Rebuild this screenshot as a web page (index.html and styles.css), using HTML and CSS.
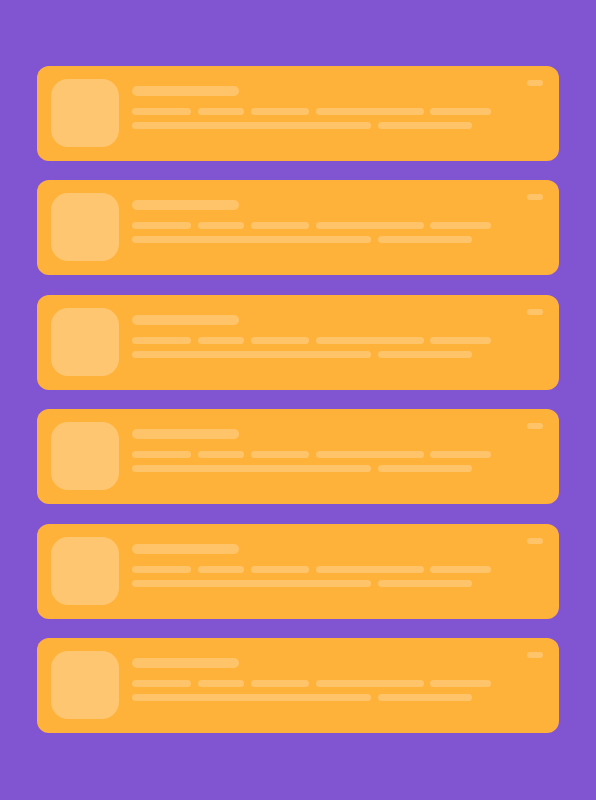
FILE: index.html
```html
<!DOCTYPE html>
<html>
<head>
<meta charset="utf-8">
<link rel="stylesheet" href="styles.css">
</head>
<body>
<div class="list">
  <div class="card"><div class="avatar"></div><div class="content"><div class="title"></div><div class="row"><span class="b w59"></span><span class="b w46"></span><span class="b w58"></span><span class="b w108"></span><span class="b w60"></span></div><div class="row"><span class="b w239"></span><span class="b w94"></span></div></div><div class="tag"></div></div>
  <div class="card"><div class="avatar"></div><div class="content"><div class="title"></div><div class="row"><span class="b w59"></span><span class="b w46"></span><span class="b w58"></span><span class="b w108"></span><span class="b w60"></span></div><div class="row"><span class="b w239"></span><span class="b w94"></span></div></div><div class="tag"></div></div>
  <div class="card"><div class="avatar"></div><div class="content"><div class="title"></div><div class="row"><span class="b w59"></span><span class="b w46"></span><span class="b w58"></span><span class="b w108"></span><span class="b w60"></span></div><div class="row"><span class="b w239"></span><span class="b w94"></span></div></div><div class="tag"></div></div>
  <div class="card"><div class="avatar"></div><div class="content"><div class="title"></div><div class="row"><span class="b w59"></span><span class="b w46"></span><span class="b w58"></span><span class="b w108"></span><span class="b w60"></span></div><div class="row"><span class="b w239"></span><span class="b w94"></span></div></div><div class="tag"></div></div>
  <div class="card"><div class="avatar"></div><div class="content"><div class="title"></div><div class="row"><span class="b w59"></span><span class="b w46"></span><span class="b w58"></span><span class="b w108"></span><span class="b w60"></span></div><div class="row"><span class="b w239"></span><span class="b w94"></span></div></div><div class="tag"></div></div>
  <div class="card"><div class="avatar"></div><div class="content"><div class="title"></div><div class="row"><span class="b w59"></span><span class="b w46"></span><span class="b w58"></span><span class="b w108"></span><span class="b w60"></span></div><div class="row"><span class="b w239"></span><span class="b w94"></span></div></div><div class="tag"></div></div>
</div>
</body>
</html>
```
FILE: styles.css
```css
html, body {
  margin: 0;
  padding: 0;
  background: #8155d1;
  font-family: "Liberation Sans", Arial, sans-serif;
}
.list {
  padding: 66px 37px 0 37px;
  display: flex;
  flex-direction: column;
  gap: 19.4px;
}
.card {
  background: #ffb23a;
  border-radius: 12px;
  height: 95px;
  box-sizing: border-box;
  padding: 13px 16px 14px 14px;
  display: flex;
  align-items: flex-start;
}
.avatar {
  width: 68px;
  height: 68px;
  border-radius: 17px;
  background: #ffc671;
  flex: none;
}
.content {
  flex: 1;
  margin-left: 13px;
  padding-top: 7px;
  display: flex;
  flex-direction: column;
}
.title {
  width: 107px;
  height: 10px;
  border-radius: 5px;
  background: #ffc46a;
}
.row {
  display: flex;
  gap: 6.5px;
  height: 7px;
}
.title + .row { margin-top: 12px; }
.row + .row { margin-top: 7px; }
.b {
  display: block;
  height: 7px;
  border-radius: 4px;
  background: #ffc46a;
}
.w59 { width: 59px; }
.w46 { width: 46.5px; }
.w58 { width: 58.5px; }
.w108 { width: 108px; }
.w60 { width: 60.5px; }
.w239 { width: 239px; }
.w94 { width: 94px; }
.tag {
  width: 16px;
  height: 6px;
  border-radius: 3px;
  background: #ffc46a;
  margin-top: 1px;
  flex: none;
}
```
